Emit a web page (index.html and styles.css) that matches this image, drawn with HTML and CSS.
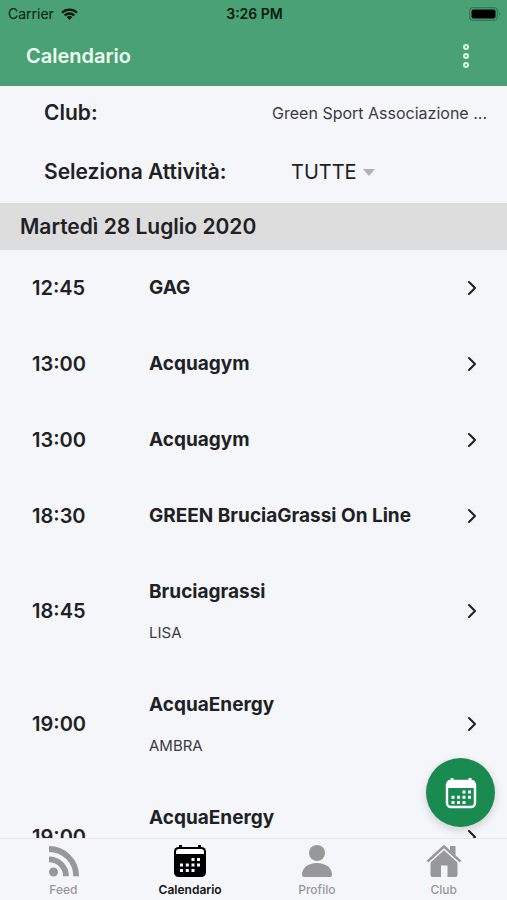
FILE: index.html
```html
<!DOCTYPE html>
<html lang="it">
<head>
<meta charset="utf-8">
<meta name="viewport" content="width=device-width, initial-scale=1">
<title>Calendario</title>
<link rel="stylesheet" href="styles.css">
</head>
<body>
<svg class="sprite" aria-hidden="true">
  <symbol id="chevron" viewBox="0 0 10 16"><path d="M2 2 8 8 2 14" fill="none" stroke="currentColor" stroke-width="2" stroke-linecap="round" stroke-linejoin="round"/></symbol>
</svg>

<header class="top">
  <div class="status">
    <div class="status-side">
      <span>Carrier</span>
      <svg width="17" height="12" viewBox="0 0 17 12" aria-hidden="true"><g fill="none" stroke="currentColor" stroke-width="2.300"><path d="M1 4.700a10.600 10.600 0 0 1 15 0"/><path d="M3.700 7.500a6.800 6.800 0 0 1 9.600 0"/></g><path d="M8.500 12 5.700 9.100a4 4 0 0 1 5.600 0z" fill="currentColor"/></svg>
    </div>
    <span class="clock">3:26 PM</span>
    <div class="status-side status-end">
      <svg width="32" height="14" viewBox="0 0 32 14" aria-hidden="true"><rect x=".7" y=".7" width="27.600" height="12.600" rx="3.500" fill="none" stroke="#2f7a53" stroke-width="1.200"/><rect x="2.500" y="2.500" width="24" height="9" rx="2" fill="#000"/><path d="M30 5q1.800 2 0 4z" fill="#23603f"/></svg>
    </div>
  </div>
  <div class="appbar">
    <h1>Calendario</h1>
    <button class="more" type="button" aria-label="Menu">
      <svg width="8" height="26" viewBox="0 0 8 26" aria-hidden="true"><g fill="none" stroke="currentColor" stroke-width="2"><circle cx="4" cy="4" r="2"/><circle cx="4" cy="13" r="2"/><circle cx="4" cy="22" r="2"/></g></svg>
    </button>
  </div>
</header>

<section class="filters">
  <div class="filter">
    <span class="filter-label">Club:</span>
    <span class="club">Green Sport Associazione ...</span>
  </div>
  <div class="filter">
    <label class="filter-label" for="activity">Seleziona Attività:</label>
    <div class="activity">
      <select id="activity"><option>TUTTE</option></select>
      <svg width="12" height="7" viewBox="0 0 12 7" aria-hidden="true"><path d="M0 0h12L6 7z" fill="#b1b2b4"/></svg>
    </div>
  </div>
</section>

<main class="schedule">
  <h2>Martedì 28 Luglio 2020</h2>
  <ul>
    <li><a class="lesson" href="#"><time>12:45</time><span class="info"><strong>GAG</strong></span><svg class="chevron"><use href="#chevron"/></svg></a></li>
    <li><a class="lesson" href="#"><time>13:00</time><span class="info"><strong>Acquagym</strong></span><svg class="chevron"><use href="#chevron"/></svg></a></li>
    <li><a class="lesson" href="#"><time>13:00</time><span class="info"><strong>Acquagym</strong></span><svg class="chevron"><use href="#chevron"/></svg></a></li>
    <li><a class="lesson" href="#"><time>18:30</time><span class="info"><strong>GREEN BruciaGrassi On Line</strong></span><svg class="chevron"><use href="#chevron"/></svg></a></li>
    <li><a class="lesson" href="#"><time>18:45</time><span class="info"><strong>Bruciagrassi</strong><span class="trainer">LISA</span></span><svg class="chevron"><use href="#chevron"/></svg></a></li>
    <li><a class="lesson" href="#"><time>19:00</time><span class="info"><strong>AcquaEnergy</strong><span class="trainer">AMBRA</span></span><svg class="chevron"><use href="#chevron"/></svg></a></li>
    <li><a class="lesson" href="#"><time>19:00</time><span class="info"><strong>AcquaEnergy</strong><span class="trainer">AMBRA</span></span><svg class="chevron"><use href="#chevron"/></svg></a></li>
  </ul>
</main>

<footer class="bottom">
  <button class="fab" type="button" aria-label="Apri calendario">
    <svg width="32" height="32" viewBox="0 0 32 32" aria-hidden="true"><path d="M7 1v3M25 1v3" stroke="#fff" stroke-width="3"/><rect x="2" y="4" width="28" height="26" rx="4" fill="none" stroke="#fff" stroke-width="2.400"/><path d="M2 11V6q0-3 3-3h22q3 0 3 3v5z" fill="#fff"/><path d="M17.500 13.500h3v3h-3zM23 13.500h3v3h-3zM6.500 18.800h3v3h-3zM12 18.800h3v3h-3zM17.500 18.800h3v3h-3zM23 18.800h3v3h-3zM6.500 24.100h3v3h-3zM12 24.100h3v3h-3zM17.500 24.100h3v3h-3z" fill="#fff"/></svg>
  </button>
  <nav class="tabs">
    <a href="#"><svg width="34" height="34" viewBox="0 0 34 34" aria-hidden="true"><circle cx="7.500" cy="28" r="4.500" fill="currentColor"/><g fill="none" stroke="currentColor" stroke-width="5.800"><path d="M3 15.300a17 17 0 0 1 17 17"/><path d="M3 5A27.200 27.200 0 0 1 30.200 32.300"/></g></svg>Feed</a>
    <a class="active" href="#" aria-current="page"><svg width="34" height="34" viewBox="0 0 34 34" aria-hidden="true"><path d="M7.500 1v4M26.500 1v4" stroke="#000" stroke-width="3"/><rect x="1" y="3" width="32" height="30" rx="4.500" fill="#000"/><path d="M3 10V8q0-3 3-3h22q3 0 3 3v2z" fill="#fff"/><path d="M18.500 14h3v3h-3zM24 14h3v3h-3zM7 19.500h3v3H7zM12.800 19.500h3v3h-3zM18.500 19.500h3v3h-3zM24 19.500h3v3h-3zM7 25h3v3H7zM12.800 25h3v3h-3zM18.500 25h3v3h-3z" fill="#fff"/></svg>Calendario</a>
    <a href="#"><svg width="34" height="34" viewBox="0 0 34 34" aria-hidden="true"><g fill="currentColor"><circle cx="17" cy="9" r="8"/><path d="M2 30.500C2 24 8 19 17 19s15 5 15 11.500q0 2.500-2.500 2.500h-25Q2 33 2 30.500z"/></g></svg>Profilo</a>
    <a href="#"><svg width="36" height="34" viewBox="0 0 36 34" aria-hidden="true"><path d="M1.500 17.500 18 2.500l16.500 15" fill="none" stroke="currentColor" stroke-width="2.500"/><path d="M24 5V2h5.500v9.500L24 6.500z" fill="currentColor"/><path d="M4.500 18.500 18 6.300l13.500 12.200V30.500Q31.500 33 29 33h-7.500V21.500h-6.500V33H7Q4.500 33 4.500 30.500z" fill="currentColor"/></svg>Club</a>
  </nav>
</footer>
</body>
</html>
```
FILE: styles.css
```css
* {
  box-sizing: border-box;
}

body {
  margin: 0;
  height: 100vh;
  display: flex;
  flex-direction: column;
  background: #f5f6fa;
  color: #202124;
  font-family: Inter, "Liberation Sans", sans-serif;
  font-size: 20px;
  line-height: 24px;
}

h1,
h2,
ul {
  margin: 0;
  padding: 0;
  font-size: 20px;
  font-weight: 600;
}

ul {
  list-style: none;
  font-weight: 400;
}

a {
  color: inherit;
  text-decoration: none;
}

button {
  border: 0;
  padding: 0;
  background: none;
  font: inherit;
}

.sprite {
  display: none;
}

.top {
  flex: none;
  background: #4aa175;
}

.status {
  display: flex;
  align-items: center;
  height: 27px;
  padding: 0 6px 0 8px;
  color: #061a10;
  font-size: 14px;
  line-height: 16px;
}

.status-side {
  flex: 1;
  display: flex;
  align-items: center;
  gap: 7px;
}

.status-end {
  justify-content: flex-end;
}

.clock {
  font-weight: 600;
}

.appbar {
  display: flex;
  align-items: center;
  justify-content: space-between;
  height: 59px;
  padding: 0 28px 2px 26px;
  color: #ecfff2;
}

.more {
  display: flex;
  justify-content: center;
  width: 26px;
  color: #d5f7df;
}

.filters {
  flex: none;
  display: grid;
  gap: 5px;
  padding: 0 20px 4px 44px;
}

.filter {
  display: flex;
  align-items: center;
  justify-content: space-between;
  height: 54px;
}

.filter-label {
  font-size: 21px;
  font-weight: 600;
}

.club {
  color: #3b3c40;
  font-size: 16px;
}

.activity {
  display: flex;
  align-items: center;
  gap: 6px;
  width: 196px;
}

.activity select {
  appearance: none;
  border: 0;
  padding: 0;
  background: none;
  color: inherit;
  font: inherit;
}

.schedule {
  flex: 1;
  min-height: 0;
  overflow-y: auto;
  scrollbar-width: none;
}

.schedule h2 {
  padding: 12px 20px 11px;
  background: #dddddd;
  font-size: 21px;
}

.lesson {
  display: grid;
  grid-template-columns: 117px 1fr 10px;
  align-items: center;
  padding: 26px 30px 26px 32px;
}

.lesson time {
  font-weight: 600;
}

.lesson strong {
  font-size: 19px;
  font-weight: 700;
}

.info {
  display: grid;
  gap: 21px;
}

.trainer {
  color: #3b3c40;
  font-size: 15px;
  line-height: 16px;
}

.chevron {
  width: 10px;
  height: 16px;
}

.bottom {
  position: relative;
  flex: none;
  border-top: 1px solid #e6e7ea;
  background: #f5f6fa;
}

.fab {
  position: absolute;
  right: 12px;
  bottom: 73px;
  display: grid;
  place-items: center;
  width: 69px;
  height: 69px;
  border-radius: 50%;
  background: #198a50;
  box-shadow: 0 3px 8px rgba(0, 0, 0, 0.16);
}

.tabs {
  display: flex;
  padding: 5px 0 2px;
}

.tabs a {
  flex: 1;
  display: flex;
  flex-direction: column;
  align-items: center;
  gap: 4px;
  color: #989898;
  font-size: 12px;
  line-height: 16px;
  font-weight: 500;
}

.tabs .active {
  color: #111;
  font-weight: 600;
}
```
